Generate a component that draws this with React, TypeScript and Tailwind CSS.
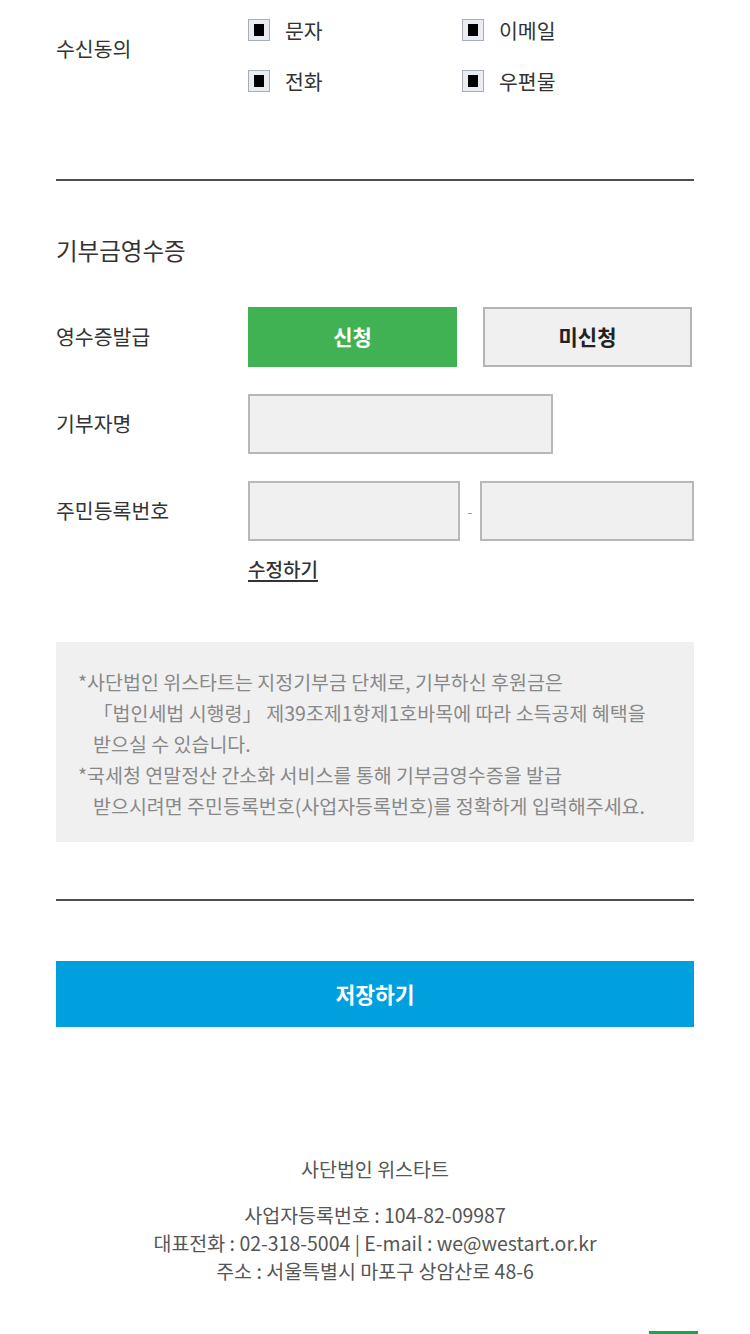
import React from 'react';

const font = { fontFamily: '"Noto Sans CJK KR", "Noto Sans", sans-serif' };

function Check({ label }: { label: string }) {
  return (
    <label className="flex items-center h-[22px] gap-[15px] cursor-pointer select-none">
      <span className="w-[22px] h-[22px] border border-[#a7aeb6] bg-[#e9edf1] flex items-center justify-center">
        <span className="w-[10px] h-[12px] bg-black" />
      </span>
      <span className="text-[20.5px] leading-[22px] text-[#333]">{label}</span>
    </label>
  );
}

function Row({ label, children }: { label: string; children: React.ReactNode }) {
  return (
    <div className="flex items-center">
      <div className="w-[192px] shrink-0 text-[20.5px] leading-[28px] text-[#333] -mt-[2px]">{label}</div>
      {children}
    </div>
  );
}

export default function App() {
  return (
    <div className="relative min-h-[1334px] bg-white overflow-hidden" style={font}>
      <div className="mx-[56px] pt-[19px]">
        {/* 수신동의 */}
        <div className="flex items-start">
          <div className="w-[192px] shrink-0 mt-[15px] text-[20.5px] leading-[28px] text-[#333]">수신동의</div>
          <div className="grid grid-cols-[214px_auto] gap-y-[29px]">
            <Check label="문자" />
            <Check label="이메일" />
            <Check label="전화" />
            <Check label="우편물" />
          </div>
        </div>

        <div className="mt-[87px] h-[2px] bg-[#4f4f4f]" />

        {/* 기부금영수증 */}
        <h2 className="mt-[54px] text-[23.5px] leading-[30px] text-[#333]">기부금영수증</h2>

        <div className="mt-[42px] flex flex-col gap-[27px]">
          <Row label="영수증발급">
            <div className="flex gap-[26px]">
              <button className="w-[209px] h-[60px] bg-[#41b254] text-white text-[21px] font-bold">신청</button>
              <button className="w-[209px] h-[60px] bg-[#f0f0f0] border-2 border-[#b4b4b4] text-[#222] text-[21px] font-bold">
                미신청
              </button>
            </div>
          </Row>
          <Row label="기부자명">
            <input className="w-[305px] h-[60px] bg-[#f0f0f0] border-2 border-[#b8b8b8] outline-none" />
          </Row>
          <Row label="주민등록번호">
            <div className="flex items-center">
              <input className="w-[212px] h-[60px] bg-[#f0f0f0] border-2 border-[#b8b8b8] outline-none" />
              <span className="w-[20px] text-center text-[14px] text-[#999]">-</span>
              <input className="w-[214px] h-[60px] bg-[#f0f0f0] border-2 border-[#b8b8b8] outline-none" />
            </div>
          </Row>
        </div>

        <div className="mt-[17px] pl-[192px]">
          <a className="inline-block text-[19px] leading-[20px] font-medium text-[#333] border-b-2 border-[#333] pb-[1px] cursor-pointer">
            수정하기
          </a>
        </div>

        {/* 안내 */}
        <div className="mt-[60px] bg-[#f0f0f0] pt-[24px] pb-[21px] pl-[22px] text-[19.5px] leading-[31px] text-[#888]">
          <p>*사단법인 위스타트는 지정기부금 단체로, 기부하신 후원금은</p>
          <p className="pl-[15px]">「법인세법 시행령」 제39조제1항제1호바목에 따라 소득공제 혜택을</p>
          <p className="pl-[15px]">받으실 수 있습니다.</p>
          <p>*국세청 연말정산 간소화 서비스를 통해 기부금영수증을 발급</p>
          <p className="pl-[15px]">받으시려면 주민등록번호(사업자등록번호)를 정확하게 입력해주세요.</p>
        </div>

        <div className="mt-[57px] h-[2px] bg-[#4f4f4f]" />

        <button className="mt-[60px] w-full h-[66px] bg-[#009fdd] text-white text-[21.5px] font-bold">저장하기</button>

        {/* footer */}
        <footer className="mt-[128px] text-center text-[19.5px] leading-[28px] text-[#555]">
          <p>사단법인 위스타트</p>
          <div className="mt-[18px]">
            <p>사업자등록번호 : 104-82-09987</p>
            <p>대표전화 : 02-318-5004 | E-mail : we@westart.or.kr</p>
            <p>주소 : 서울특별시 마포구 상암산로 48-6</p>
          </div>
        </footer>
      </div>

      <div className="absolute left-[649px] top-[1331px] w-[49px] h-[20px] bg-[#1ea34a]" />
    </div>
  );
}
